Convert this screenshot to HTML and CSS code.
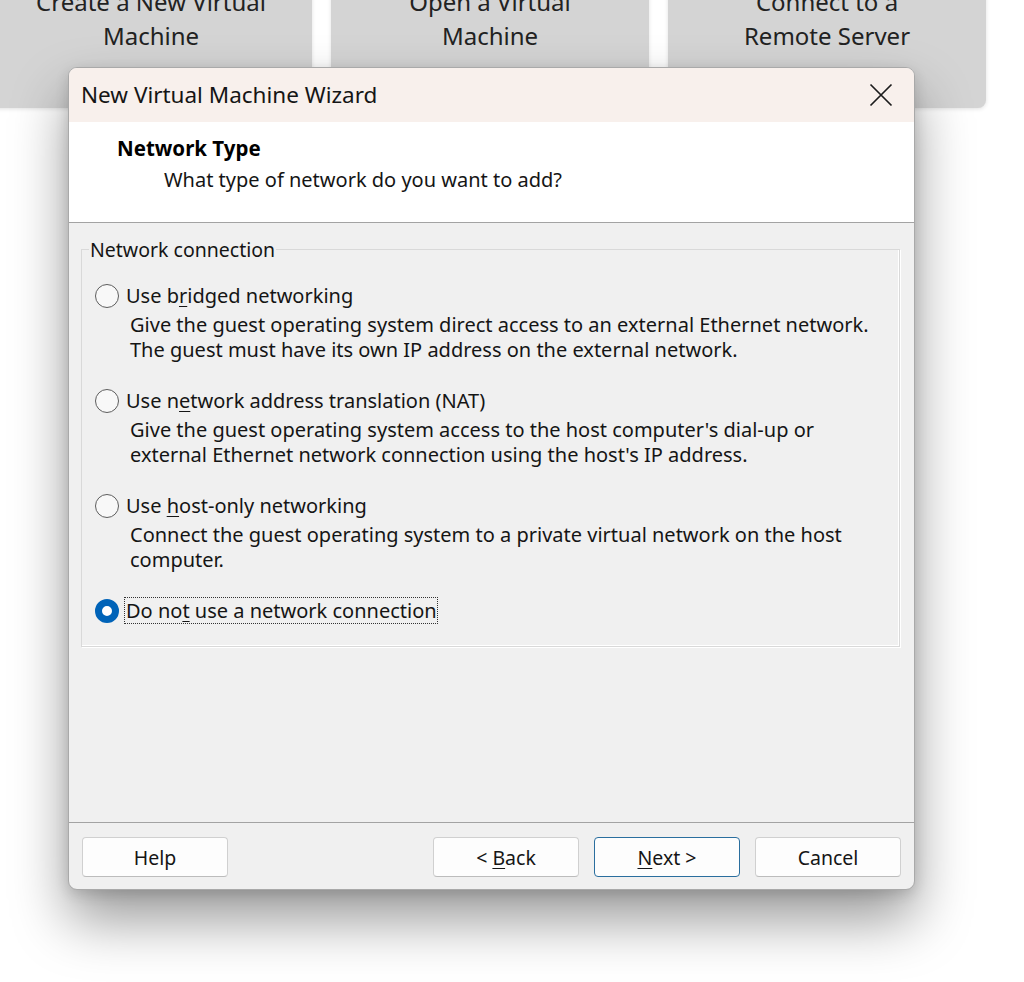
FILE: index.html
```html
<!DOCTYPE html>
<html lang="en">
<head>
<meta charset="utf-8">
<title>New Virtual Machine Wizard</title>
<link rel="stylesheet" href="styles.css">
</head>
<body>
<div class="tiles">
  <div class="tile"><span>Create a New Virtual<br>Machine</span></div>
  <div class="tile"><span>Open a Virtual<br>Machine</span></div>
  <div class="tile"><span>Connect to a<br>Remote Server</span></div>
</div>

<div class="dialog">
  <div class="titlebar">
    <span class="title">New Virtual Machine Wizard</span>
    <span class="close">
      <svg width="24" height="24" viewBox="0 0 24 24"><path d="M1.5 1.5 L22.5 22.5 M22.5 1.5 L1.5 22.5" stroke="#1c1c1c" stroke-width="1.7" fill="none"/></svg>
    </span>
  </div>
  <div class="header">
    <div class="h-title">Network Type</div>
    <div class="h-sub">What type of network do you want to add?</div>
  </div>
  <div class="body">
    <fieldset class="group">
      <legend>Network connection</legend>
      <div class="option">
        <div class="opt-label"><span class="radio"></span><span class="lbl">Use b<u>r</u>idged networking</span></div>
        <div class="desc">Give the guest operating system direct access to an external Ethernet network.<br>The guest must have its own IP address on the external network.</div>
      </div>
      <div class="option">
        <div class="opt-label"><span class="radio"></span><span class="lbl">Use n<u>e</u>twork address translation (NAT)</span></div>
        <div class="desc">Give the guest operating system access to the host computer's dial-up or<br>external Ethernet network connection using the host's IP address.</div>
      </div>
      <div class="option">
        <div class="opt-label"><span class="radio"></span><span class="lbl">Use <u>h</u>ost-only networking</span></div>
        <div class="desc">Connect the guest operating system to a private virtual network on the host<br>computer.</div>
      </div>
      <div class="option last">
        <div class="opt-label"><span class="radio checked"></span><span class="lbl focus">Do no<u>t</u> use a network connection</span></div>
      </div>
    </fieldset>
  </div>
  <div class="footer">
    <span class="btn"><span>Help</span></span>
    <span class="spacer"></span>
    <span class="btn"><span>&lt; <u>B</u>ack</span></span>
    <span class="btn default"><span><u>N</u>ext &gt;</span></span>
    <span class="btn"><span>Cancel</span></span>
  </div>
</div>
</body>
</html>
```

FILE: styles.css
```css
* { box-sizing: border-box; }
html, body {
  margin: 0;
  padding: 0;
  background: #ffffff;
  width: 1024px;
  height: 982px;
  overflow: hidden;
  font-family: "Noto Sans", "Open Sans", sans-serif;
  color: #151515;
}

.tiles {
  display: flex;
  gap: 19px;
  margin-left: -10px;
  margin-top: -40px;
  width: 1000px;
}
.tile {
  width: 322px;
  height: 148px;
  background: #d4d4d4;
  border-radius: 8px;
  box-shadow: 0 1px 4px rgba(0,0,0,0.12);
  padding-top: 25px;
  text-align: center;
  font-size: 24px;
  line-height: 34px;
  color: #222;
}
.tile:nth-child(2), .tile:nth-child(3) { width: 318px; }

.dialog {
  position: absolute;
  left: 68px;
  top: 67px;
  width: 847px;
  height: 823px;
  border: 1px solid #a9a9a9;
  border-radius: 9px;
  background: #f0f0f0;
  box-shadow: 0 30px 56px rgba(0,0,0,0.40), 0 4px 14px rgba(0,0,0,0.14);
  display: flex;
  flex-direction: column;
  overflow: hidden;
}

.titlebar {
  height: 54px;
  flex: none;
  background: #f8f0ec;
  display: flex;
  align-items: center;
  padding: 0 21px 0 12px;
}
.title {
  font-size: 22.5px;
  color: #151515;
  flex: 1;
  margin-top: -2px;
}
.close { display: flex; width: 24px; height: 24px; }

.header {
  height: 101px;
  flex: none;
  background: #ffffff;
  border-bottom: 1px solid #a3a3a3;
  padding: 13px 0 0 48px;
}
.h-title {
  font-size: 20.5px;
  font-weight: 700;
  line-height: 26px;
  color: #000;
}
.h-sub {
  font-size: 20px;
  line-height: 26px;
  margin-top: 6px;
  padding-left: 47px;
  color: #151515;
}

.body {
  flex: 1;
  padding: 14px 14px 0 12px;
}
.group {
  margin: 0;
  border: 1px solid #d9d9d9;
  box-shadow: inset -1px -1px 0 #ffffff, 1px 1px 0 #ffffff;
  padding: 21px 10px 23px 13px;
  min-width: 0;
}
.group legend {
  font-size: 19.5px;
  line-height: 25px;
  padding: 0 1px;
  margin-left: -6px;
  color: #151515;
}

.option {
  margin-bottom: 26px;
  font-size: 20px;
  line-height: 25px;
}
.option.last { margin-bottom: 0; }
.opt-label {
  display: flex;
  align-items: center;
  height: 25px;
  margin-bottom: 4px;
}
.option.last .opt-label { margin-bottom: 0; margin-top: 2px; }
.radio {
  width: 24px;
  height: 24px;
  border-radius: 50%;
  border: 1px solid #5d5d5d;
  background: #f8f8f8;
  flex: none;
  margin-right: 7px;
}
.radio.checked {
  border: 7.5px solid #0063b8;
  background: #ffffff;
}
.lbl { color: #151515; }
.lbl.focus {
  outline: 1px dotted #333;
  outline-offset: 0;
  margin-left: -1px;
  padding: 0 0 0 1px;
}
.desc {
  padding-left: 35px;
  color: #151515;
}
u { text-decoration-thickness: 1px; text-underline-offset: 3px; }

.footer {
  height: 67px;
  flex: none;
  border-top: 1px solid #a3a3a3;
  display: flex;
  align-items: flex-start;
  gap: 15px;
  padding: 14px 13px 0 13px;
}
.spacer { flex: 1; }
.btn {
  width: 146px;
  height: 40px;
  background: #fdfdfd;
  border: 1px solid #d0d0d0;
  border-bottom-color: #bcbcbc;
  border-radius: 4px;
  display: flex;
  align-items: center;
  justify-content: center;
  font-size: 19.5px;
  color: #151515;
}
.btn.default {
  border: 1px solid #2a6e9e;
}
```
